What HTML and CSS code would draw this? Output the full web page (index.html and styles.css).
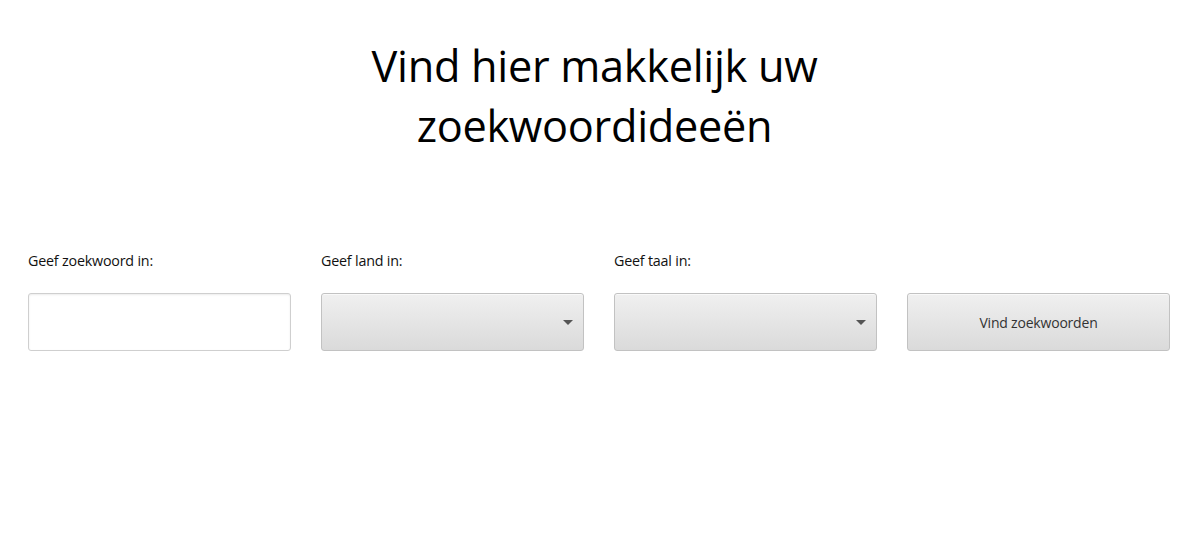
FILE: index.html
```html
<!DOCTYPE html>
<html lang="nl">
<head>
<meta charset="utf-8">
<title>Zoekwoordideeën</title>
<link rel="stylesheet" href="styles.css">
</head>
<body>
<main class="page">
  <h1 class="title">Vind hier makkelijk uw<br>zoekwoordideeën</h1>
  <form class="form">
    <div class="field">
      <label class="label">Geef zoekwoord in:</label>
      <input class="input" type="text">
    </div>
    <div class="field">
      <label class="label">Geef land in:</label>
      <div class="select"><span class="caret"></span></div>
    </div>
    <div class="field">
      <label class="label">Geef taal in:</label>
      <div class="select"><span class="caret"></span></div>
    </div>
    <div class="field">
      <span class="label">&nbsp;</span>
      <button class="button" type="button">Vind zoekwoorden</button>
    </div>
  </form>
</main>
</body>
</html>
```
FILE: styles.css
```css
* { box-sizing: border-box; }
html, body { margin: 0; padding: 0; background: #fff; }
body {
  font-family: "Open Sans", "Noto Sans", "Liberation Sans", sans-serif;
  color: #000;
}
.page { padding-top: 36px; }
.title {
  margin: 0;
  text-align: center;
  font-weight: 400;
  font-size: 43.3px;
  line-height: 60px;
  letter-spacing: -0.3px;
}
.form {
  display: grid;
  grid-template-columns: repeat(4, 263px);
  column-gap: 30px;
  padding-left: 28px;
  margin-top: 96px;
}
.field { display: flex; flex-direction: column; }
.label {
  font-size: 14.3px;
  line-height: 18px;
  height: 18px;
  margin-bottom: 23px;
  color: #111;
  letter-spacing: -0.2px;
}
.input {
  height: 58px;
  border: 1px solid #cfcfcf;
  border-radius: 3px;
  box-shadow: inset 0 1px 2px rgba(0,0,0,0.08);
  background: #fff;
  font: inherit;
  outline: none;
}
.select, .button {
  height: 58px;
  border: 1px solid #c2c2c2;
  border-radius: 3px;
  background: linear-gradient(#f0f0f0, #dadada);
  box-shadow: inset 0 1px 0 rgba(255,255,255,0.6);
}
.select {
  display: flex;
  align-items: center;
  justify-content: flex-end;
  padding-right: 10px;
}
.caret {
  width: 0; height: 0;
  border-left: 5px solid transparent;
  border-right: 5px solid transparent;
  border-top: 5px solid #555;
}
.button {
  font-family: inherit;
  font-size: 14px;
  color: #333;
  padding: 0;
  cursor: pointer;
  letter-spacing: -0.2px;
}
```
